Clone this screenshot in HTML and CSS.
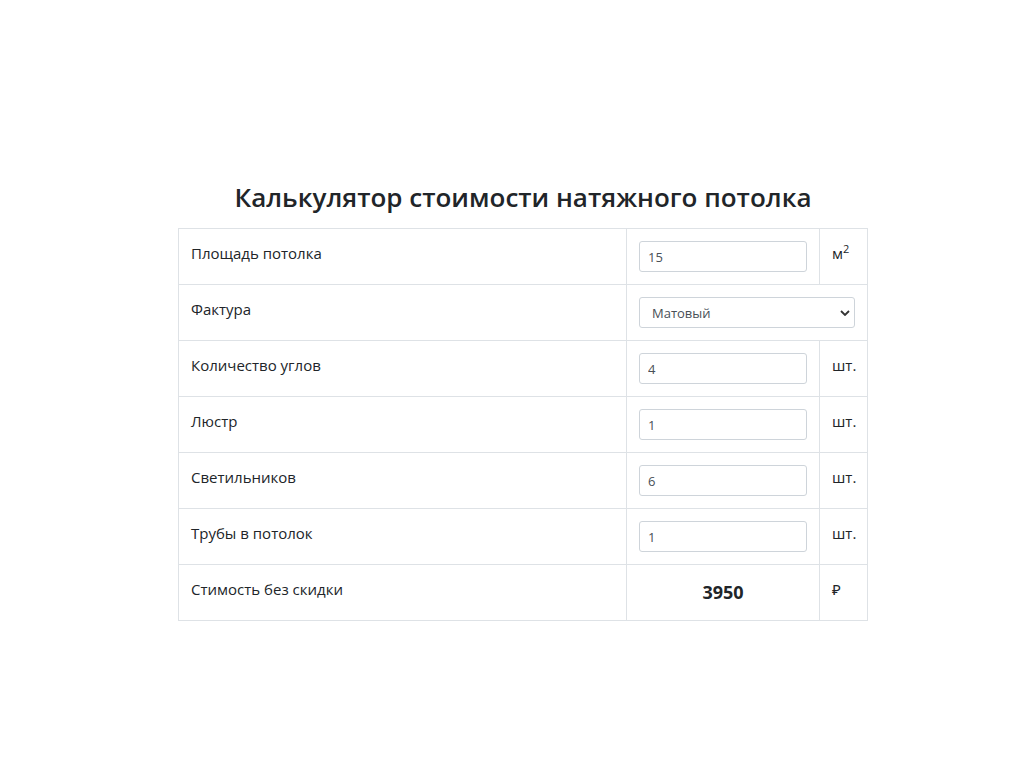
FILE: index.html
```html
<!DOCTYPE html>
<html lang="ru">
  <head>
    <meta charset="UTF-8" />
    <meta name="viewport" content="width=device-width, initial-scale=1.0" />
    <title>Калькулятор стоимости натяжного потолка</title>
    <link rel="stylesheet" href="styles.css">
  </head>
  <body>
    <div class="calc">
      <h3 class="calc-title">Калькулятор стоимости натяжного потолка</h3>
      <table class="calc-table">
        <colgroup>
          <col class="col-label" />
          <col class="col-input" />
          <col class="col-unit" />
        </colgroup>
        <tr>
          <td>Площадь потолка</td>
          <td><input class="field" type="text" value="15" /></td>
          <td>м<sup>2</sup></td>
        </tr>
        <tr>
          <td>Фактура</td>
          <td colspan="2">
            <span class="select-wrap">
              <select class="field field-select">
                <option>Матовый</option>
                <option>Глянцевый</option>
                <option>Сатиновый</option>
              </select>
              <svg class="select-arrow" width="10" height="6" viewBox="0 0 10 6">
                <path d="M1 1l4 4 4-4" fill="none" stroke="#333" stroke-width="1.8" />
              </svg>
            </span>
          </td>
        </tr>
        <tr>
          <td>Количество углов</td>
          <td><input class="field" type="text" value="4" /></td>
          <td>шт.</td>
        </tr>
        <tr>
          <td>Люстр</td>
          <td><input class="field" type="text" value="1" /></td>
          <td>шт.</td>
        </tr>
        <tr>
          <td>Светильников</td>
          <td><input class="field" type="text" value="6" /></td>
          <td>шт.</td>
        </tr>
        <tr>
          <td>Трубы в потолок</td>
          <td><input class="field" type="text" value="1" /></td>
          <td>шт.</td>
        </tr>
        <tr>
          <td>Стимость без скидки</td>
          <td class="total">3950</td>
          <td>₽</td>
        </tr>
      </table>
    </div>
  </body>
</html>
```

FILE: styles.css
```css
body {
  margin: 0;
  font-family: 'Open Sans', 'Noto Sans', sans-serif;
  font-size: 15px;
  line-height: 24px;
  color: #212529;
  background: #fff;
}

.calc {
  width: 690px;
  margin: 179px 0 0 178px;
}

.calc-title {
  margin: 0 0 13px;
  font-size: 26px;
  font-weight: 600;
  line-height: 36px;
  text-align: center;
}

.calc-table {
  width: 100%;
  border-collapse: collapse;
  table-layout: fixed;
}

.col-label {
  width: 448px;
}

.col-input {
  width: 193px;
}

.calc-table td {
  height: 31px;
  padding: 12px;
  border: 1px solid #dee2e6;
  vertical-align: top;
}

.calc-table sup {
  font-size: 11px;
  line-height: 0;
}

.field {
  display: block;
  box-sizing: border-box;
  width: 100%;
  height: 31px;
  padding: 4px 8px;
  font-family: inherit;
  font-size: 13px;
  color: #495057;
  background: #fff;
  border: 1px solid #ced4da;
  border-radius: 3px;
}

.select-wrap {
  position: relative;
  display: block;
}

.field-select {
  padding-left: 12px;
  appearance: none;
  -webkit-appearance: none;
}

.select-arrow {
  position: absolute;
  right: 5px;
  top: 13px;
  pointer-events: none;
}

.total {
  font-size: 18px;
  font-weight: 700;
  text-align: center;
  line-height: 30px;
}
```
